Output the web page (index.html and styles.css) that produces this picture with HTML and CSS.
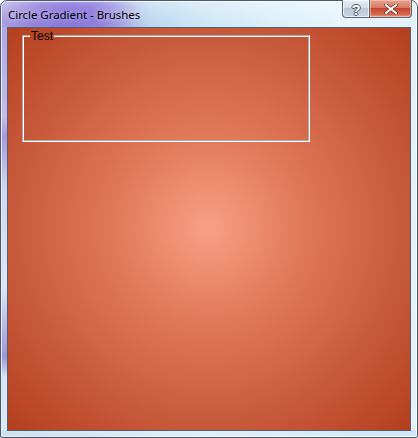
FILE: index.html
```html
<!DOCTYPE html>
<html>
<head>
<meta charset="utf-8">
<title>Circle Gradient - Brushes</title>
<link rel="stylesheet" href="styles.css">
</head>
<body>
<div class="window">
  <div class="titlebar">
    <span class="title">Circle Gradient - Brushes</span>
    <div class="caption-buttons">
      <div class="btn btn-help"><span class="help-glyph">?</span></div>
      <div class="btn btn-close">
        <svg width="14" height="10" viewBox="0 0 14 10">
          <path d="M2 1 L12 9 M12 1 L2 9" stroke="#5a2a20" stroke-width="3.4" stroke-linecap="square"/>
          <path d="M2 1 L12 9 M12 1 L2 9" stroke="#ffffff" stroke-width="2" stroke-linecap="square"/>
        </svg>
      </div>
    </div>
  </div>
  <div class="client">
    <fieldset class="group">
      <legend class="group-label">Test</legend>
    </fieldset>
  </div>
</div>
</body>
</html>
```
FILE: styles.css
```css
html, body {
  margin: 0;
  padding: 0;
  background: #ffffff;
}
body {
  width: 418px;
  height: 438px;
  overflow: hidden;
}
.window {
  box-sizing: border-box;
  width: 418px;
  height: 438px;
  border: 1px solid #4b5a66;
  border-radius: 7px 7px 2px 2px;
  padding: 26px 6px 6px 6px;
  display: flex;
  flex-direction: column;
  position: relative;
  background:
    radial-gradient(ellipse 70px 26px at 70px 14px, rgba(120,100,220,0.85), rgba(120,100,220,0) 100%),
    linear-gradient(180deg, rgba(255,255,255,0.35) 0, rgba(255,255,255,0) 22px),
    linear-gradient(90deg, #a99de0 0, #a090dc 40px, #a394dd 100px, #bcd8ef 150px, #cfe8f6 210px, #dcf0fa 280px, #e6f4fb 340px, #e2f1fa 418px);
  box-shadow: inset 0 0 0 1px rgba(255,255,255,0.75);
}
.window::before {
  content: "";
  position: absolute;
  left: 1px;
  top: 26px;
  width: 6px;
  bottom: 1px;
  background: linear-gradient(180deg, #b2a6e4 0, #c5bde9 90px, #a898dc 110px, #cfd7ef 160px, #dbe9f6 260px, #9f94d6 330px, #d5e6f4 350px, #d8ecf7 100%);
  border-radius: 0 0 0 1px;
}
.window::after {
  content: "";
  position: absolute;
  left: 1px;
  right: 1px;
  bottom: 1px;
  height: 6px;
  background: linear-gradient(90deg, #cfe2f2 0, #e0f0fa 50%, #cfe6f5 100%);
}
.titlebar {
  position: absolute;
  left: 0;
  top: 0;
  right: 0;
  height: 26px;
  display: flex;
  align-items: flex-start;
  justify-content: space-between;
}
.title {
  font-family: "Noto Sans", "DejaVu Sans", sans-serif;
  font-size: 11.5px;
  color: #000000;
  margin: 6px 0 0 7px;
  letter-spacing: -0.05px;
  text-shadow: 0 0 6px rgba(255,255,255,0.9);
}
.caption-buttons {
  display: flex;
  margin-right: 5px;
  margin-top: -1px;
  z-index: 2;
}
.btn {
  box-sizing: border-box;
  height: 18px;
  border: 1px solid #5d6a76;
  border-top: none;
  display: flex;
  align-items: center;
  justify-content: center;
}
.btn-help {
  width: 27px;
  border-radius: 0 0 0 4px;
  border-right: none;
  background: linear-gradient(180deg, #e8eef4 0, #d4dde6 45%, #b9c6d3 50%, #c8d6e2 100%);
  box-shadow: inset 0 0 0 1px rgba(255,255,255,0.6);
}
.help-glyph {
  font-family: "Liberation Sans", "DejaVu Sans", sans-serif;
  font-weight: bold;
  font-size: 15px;
  color: #ffffff;
  line-height: 15px;
  margin-top: 1px;
  text-shadow: 1px 0 0 #4a5664, -1px 0 0 #4a5664, 0 1px 0 #4a5664, 0 -1px 0 #4a5664;
}
.btn-close {
  width: 43px;
  border-radius: 0 0 4px 0;
  background: linear-gradient(180deg, #e7a391 0, #d87a63 45%, #c54630 50%, #d56a4f 85%, #e59f86 100%);
  box-shadow: inset 0 0 0 1px rgba(255,220,210,0.5);
}
.client {
  box-sizing: border-box;
  width: 404px;
  height: 404px;
  border: 1px solid #55606c;
  background: radial-gradient(circle farthest-corner at 200px 200px, #f7a085 0%, #df7657 35%, #c85a3c 68%, #b43e1d 100%);
  position: relative;
  z-index: 1;
}
.group {
  box-sizing: border-box;
  margin: 0;
  position: absolute;
  left: 14px;
  top: 2px;
  width: 288px;
  height: 112px;
  padding: 0;
  border: 2px groove #ffffff;
  min-inline-size: 0;
}
.group-label {
  font-family: "Liberation Sans", "DejaVu Sans", sans-serif;
  font-size: 12px;
  color: #000000;
  padding: 0 1px;
  margin-left: 6px;
  line-height: 12px;
}
```
